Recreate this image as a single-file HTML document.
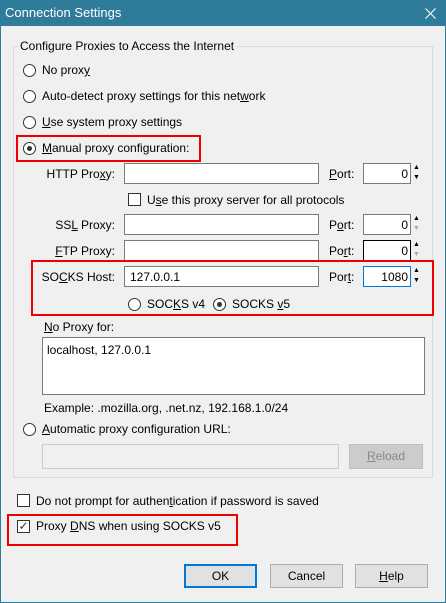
<!DOCTYPE html>
<html><head><meta charset="utf-8"><style>
*{box-sizing:border-box;margin:0;padding:0}
body{width:446px;height:603px;background:#f0f0f0;font-family:"Liberation Sans",sans-serif;font-size:12px;color:#000;position:relative;overflow:hidden}
.a{position:absolute;white-space:nowrap}
.win{position:absolute;left:0;top:0;width:446px;height:603px;border:1px solid #2e7b9a}
.title{position:absolute;left:0;top:0;width:446px;height:26px;background:#2e7b9a;color:#fff;font-size:13px}
.rad{position:absolute;width:13px;height:13px;border:1px solid #333;border-radius:50%;background:#fff}
.rad.on::after{content:"";position:absolute;left:3px;top:3px;width:5px;height:5px;border-radius:50%;background:#333}
.chk{position:absolute;width:13px;height:13px;border:1px solid #333;background:#fff}
.inp{position:absolute;border:1px solid #7a7a7a;background:#fff;height:21px}
.red{position:absolute;border:2px solid #e00}
.btn{position:absolute;border:1px solid #adadad;background:#e1e1e1;text-align:center;line-height:22px;height:24px;width:73px}
.sp{position:absolute;width:9px;height:21px;font-size:7px;line-height:10px;text-align:center;color:#000}
u{text-decoration:underline}
.lbl{position:absolute;text-align:right;width:110px;white-space:nowrap}
</style></head><body>
<div class="win"></div>
<div class="title"><span class="a" style="left:5px;top:5px">Connection Settings</span>
<svg class="a" style="left:425px;top:8px" width="11" height="11"><path d="M0.5 0.5L10.5 10.5M10.5 0.5L0.5 10.5" stroke="#fff" stroke-width="1.1"/></svg></div>
<div class="a" style="left:13px;top:46px;width:420px;height:432px;border:1px solid #dcdcdc"></div>
<div class="a" style="left:18px;top:39px;background:#f0f0f0;padding:0 2px">Configure Proxies to Access the Internet</div>

<div class="rad" style="left:23px;top:64px"></div><div class="a" style="left:42px;top:63px">No prox<u>y</u></div>
<div class="rad" style="left:23px;top:90px"></div><div class="a" style="left:42px;top:89px">Auto-detect proxy settings for this net<u>w</u>ork</div>
<div class="rad" style="left:23px;top:116px"></div><div class="a" style="left:42px;top:115px"><u>U</u>se system proxy settings</div>
<div class="rad on" style="left:23px;top:142px"></div><div class="a" style="left:42px;top:141px"><u>M</u>anual proxy configuration:</div>
<div class="red" style="left:16px;top:135px;width:185px;height:27px"></div>

<div class="lbl" style="left:5px;top:167px">HTTP Pro<u>x</u>y:</div>
<div class="inp" style="left:124px;top:163px;width:195px"></div>
<div class="a" style="left:329px;top:167px"><u>P</u>ort:</div>
<div class="inp" style="left:363px;top:163px;width:48px"><span class="a" style="right:2px;top:3px">0</span></div>
<div class="sp" style="left:412px;top:163px">▲<br>▼</div>

<div class="chk" style="left:128px;top:193px"></div><div class="a" style="left:147px;top:193px">U<u>s</u>e this proxy server for all protocols</div>

<div class="lbl" style="left:5px;top:218px">SS<u>L</u> Proxy:</div>
<div class="inp" style="left:124px;top:214px;width:195px"></div>
<div class="a" style="left:329px;top:218px">P<u>o</u>rt:</div>
<div class="inp" style="left:363px;top:214px;width:48px"><span class="a" style="right:2px;top:3px">0</span></div>
<div class="sp" style="left:412px;top:214px">▲<br><span style="color:#aaa">▼</span></div>

<div class="lbl" style="left:5px;top:244px"><u>F</u>TP Proxy:</div>
<div class="inp" style="left:124px;top:240px;width:195px"></div>
<div class="a" style="left:329px;top:244px">Po<u>r</u>t:</div>
<div class="inp" style="left:363px;top:240px;width:48px;border-color:#000"><span class="a" style="right:2px;top:3px">0</span></div>
<div class="sp" style="left:412px;top:240px">▲<br><span style="color:#aaa">▼</span></div>

<div class="lbl" style="left:5px;top:270px">SO<u>C</u>KS Host:</div>
<div class="inp" style="left:124px;top:266px;width:195px"><span class="a" style="left:5px;top:3px">127.0.0.1</span></div>
<div class="a" style="left:329px;top:270px">Por<u>t</u>:</div>
<div class="inp" style="left:363px;top:266px;width:48px;border-color:#0078d7"><span class="a" style="right:2px;top:3px">1080</span></div>
<div class="sp" style="left:412px;top:266px">▲<br>▼</div>
<div class="rad" style="left:128px;top:298px"></div><div class="a" style="left:147px;top:297px">SOC<u>K</u>S v4</div>
<div class="rad on" style="left:213px;top:298px"></div><div class="a" style="left:232px;top:297px">SOCKS <u>v</u>5</div>
<div class="red" style="left:31px;top:260px;width:403px;height:56px"></div>

<div class="a" style="left:44px;top:320px"><u>N</u>o Proxy for:</div>
<div class="inp" style="left:42px;top:337px;width:383px;height:58px"><span class="a" style="left:4px;top:5px">localhost, 127.0.0.1</span></div>
<div class="a" style="left:44px;top:401px">Example: .mozilla.org, .net.nz, 192.168.1.0/24</div>

<div class="rad" style="left:23px;top:423px"></div><div class="a" style="left:42px;top:422px"><u>A</u>utomatic proxy configuration URL:</div>
<div class="inp" style="left:42px;top:444px;width:297px;height:25px;border-color:#ccc;background:#f0f0f0"></div>
<div class="btn" style="left:349px;top:444px;width:74px;height:25px;background:#ccc;border-color:#bfbfbf;color:#888"><u>R</u>eload</div>

<div class="chk" style="left:17px;top:494px"></div><div class="a" style="left:36px;top:494px">Do not prompt for authen<u>t</u>ication if password is saved</div>
<div class="chk" style="left:17px;top:520px;font-size:12px;line-height:11px;text-align:center;color:#333">✓</div><div class="a" style="left:36px;top:519px">Proxy <u>D</u>NS when using SOCKS v5</div>
<div class="red" style="left:7px;top:514px;width:231px;height:32px"></div>

<div class="btn" style="left:184px;top:564px;border:2px solid #0078d7;line-height:20px">OK</div>
<div class="btn" style="left:270px;top:564px">Cancel</div>
<div class="btn" style="left:355px;top:564px"><u>H</u>elp</div>
</body></html>
